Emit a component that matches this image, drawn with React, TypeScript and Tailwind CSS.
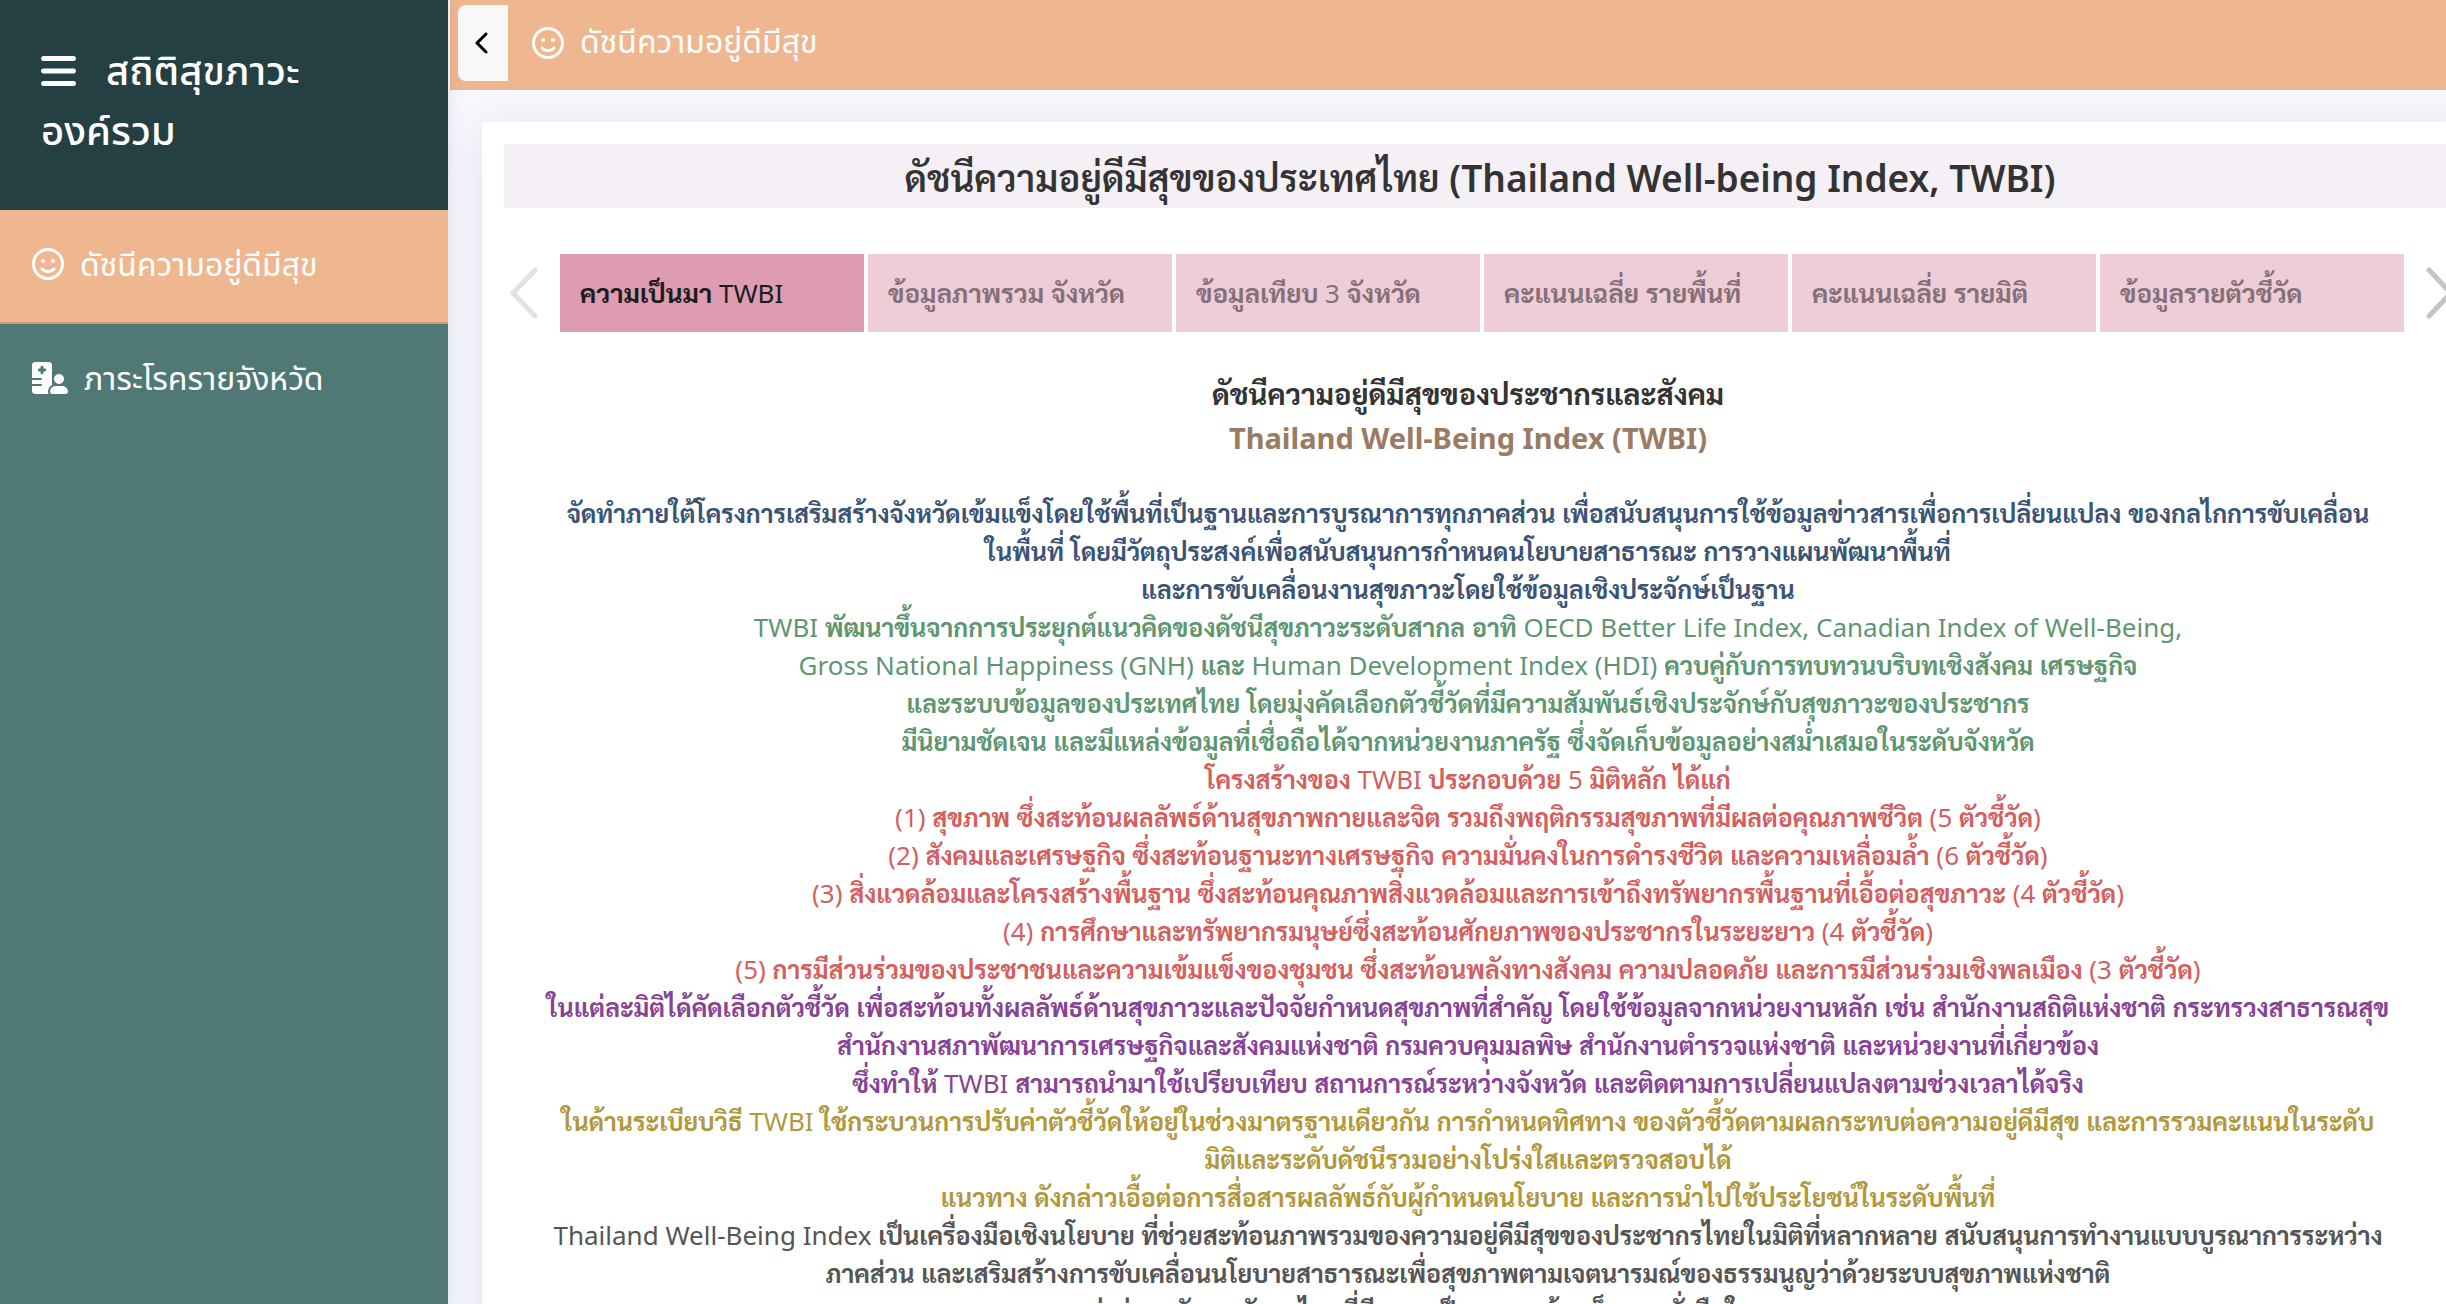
import { FaBars, FaChevronLeft, FaHospitalUser, FaRegFaceSmile } from "react-icons/fa6";

const tabs = [
  "ความเป็นมา TWBI",
  "ข้อมูลภาพรวม จังหวัด",
  "ข้อมูลเทียบ 3 จังหวัด",
  "คะแนนเฉลี่ย รายพื้นที่",
  "คะแนนเฉลี่ย รายมิติ",
  "ข้อมูลรายตัวชี้วัด",
];

const paragraphs = [
  {
    color: "text-[#3a5475]",
    lines: [
      "จัดทำภายใต้โครงการเสริมสร้างจังหวัดเข้มแข็งโดยใช้พื้นที่เป็นฐานและการบูรณาการทุกภาคส่วน เพื่อสนับสนุนการใช้ข้อมูลข่าวสารเพื่อการเปลี่ยนแปลง ของกลไกการขับเคลื่อน",
      "ในพื้นที่ โดยมีวัตถุประสงค์เพื่อสนับสนุนการกำหนดนโยบายสาธารณะ การวางแผนพัฒนาพื้นที่",
      "และการขับเคลื่อนงานสุขภาวะโดยใช้ข้อมูลเชิงประจักษ์เป็นฐาน",
    ],
  },
  {
    color: "text-[#5f9672]",
    lines: [
      "TWBI พัฒนาขึ้นจากการประยุกต์แนวคิดของดัชนีสุขภาวะระดับสากล อาทิ OECD Better Life Index, Canadian Index of Well-Being,",
      "Gross National Happiness (GNH) และ Human Development Index (HDI) ควบคู่กับการทบทวนบริบทเชิงสังคม เศรษฐกิจ",
      "และระบบข้อมูลของประเทศไทย โดยมุ่งคัดเลือกตัวชี้วัดที่มีความสัมพันธ์เชิงประจักษ์กับสุขภาวะของประชากร",
      "มีนิยามชัดเจน และมีแหล่งข้อมูลที่เชื่อถือได้จากหน่วยงานภาครัฐ ซึ่งจัดเก็บข้อมูลอย่างสม่ำเสมอในระดับจังหวัด",
    ],
  },
  {
    color: "text-[#d35f5f]",
    lines: [
      "โครงสร้างของ TWBI ประกอบด้วย 5 มิติหลัก ได้แก่",
      "(1) สุขภาพ ซึ่งสะท้อนผลลัพธ์ด้านสุขภาพกายและจิต รวมถึงพฤติกรรมสุขภาพที่มีผลต่อคุณภาพชีวิต (5 ตัวชี้วัด)",
      "(2) สังคมและเศรษฐกิจ ซึ่งสะท้อนฐานะทางเศรษฐกิจ ความมั่นคงในการดำรงชีวิต และความเหลื่อมล้ำ (6 ตัวชี้วัด)",
      "(3) สิ่งแวดล้อมและโครงสร้างพื้นฐาน ซึ่งสะท้อนคุณภาพสิ่งแวดล้อมและการเข้าถึงทรัพยากรพื้นฐานที่เอื้อต่อสุขภาวะ (4 ตัวชี้วัด)",
      "(4) การศึกษาและทรัพยากรมนุษย์ซึ่งสะท้อนศักยภาพของประชากรในระยะยาว (4 ตัวชี้วัด)",
      "(5) การมีส่วนร่วมของประชาชนและความเข้มแข็งของชุมชน ซึ่งสะท้อนพลังทางสังคม ความปลอดภัย และการมีส่วนร่วมเชิงพลเมือง (3 ตัวชี้วัด)",
    ],
  },
  {
    color: "text-[#874394]",
    lines: [
      "ในแต่ละมิติได้คัดเลือกตัวชี้วัด เพื่อสะท้อนทั้งผลลัพธ์ด้านสุขภาวะและปัจจัยกำหนดสุขภาพที่สำคัญ โดยใช้ข้อมูลจากหน่วยงานหลัก เช่น สำนักงานสถิติแห่งชาติ กระทรวงสาธารณสุข",
      "สำนักงานสภาพัฒนาการเศรษฐกิจและสังคมแห่งชาติ กรมควบคุมมลพิษ สำนักงานตำรวจแห่งชาติ และหน่วยงานที่เกี่ยวข้อง",
      "ซึ่งทำให้ TWBI สามารถนำมาใช้เปรียบเทียบ สถานการณ์ระหว่างจังหวัด และติดตามการเปลี่ยนแปลงตามช่วงเวลาได้จริง",
    ],
  },
  {
    color: "text-[#b1983f]",
    lines: [
      "ในด้านระเบียบวิธี TWBI ใช้กระบวนการปรับค่าตัวชี้วัดให้อยู่ในช่วงมาตรฐานเดียวกัน การกำหนดทิศทาง ของตัวชี้วัดตามผลกระทบต่อความอยู่ดีมีสุข และการรวมคะแนนในระดับ",
      "มิติและระดับดัชนีรวมอย่างโปร่งใสและตรวจสอบได้",
      "แนวทาง ดังกล่าวเอื้อต่อการสื่อสารผลลัพธ์กับผู้กำหนดนโยบาย และการนำไปใช้ประโยชน์ในระดับพื้นที่",
    ],
  },
  {
    color: "text-[#555555]",
    lines: [
      "Thailand Well-Being Index เป็นเครื่องมือเชิงนโยบาย ที่ช่วยสะท้อนภาพรวมของความอยู่ดีมีสุขของประชากรไทยในมิติที่หลากหลาย สนับสนุนการทำงานแบบบูรณาการระหว่าง",
      "ภาคส่วน และเสริมสร้างการขับเคลื่อนนโยบายสาธารณะเพื่อสุขภาพตามเจตนารมณ์ของธรรมนูญว่าด้วยระบบสุขภาพแห่งชาติ",
      "มุ่งสู่การพัฒนาสังคมไทยที่มีความเป็นธรรม เข้มแข็ง และยั่งยืนในระยะยาว",
    ],
  },
];

/* Thai runs are set bold, Latin words and digits keep the surrounding weight. */
function Mixed({ text, thaiClass }: { text: string; thaiClass: string }) {
  return (
    <>
      {text.split(/([\u0E00-\u0E7F]+)/).map((part, i) =>
        i % 2 ? (
          <b key={i} className={thaiClass}>
            {part}
          </b>
        ) : (
          part
        ),
      )}
    </>
  );
}

function Arrow({ points }: { points: string }) {
  return (
    <svg viewBox="0 0 28 52" className="h-[52px] w-7" fill="none" stroke="currentColor" strokeWidth="5" strokeLinecap="round" strokeLinejoin="round" aria-hidden="true">
      <polyline points={points} />
    </svg>
  );
}

export default function App() {
  return (
    <div className="flex h-screen overflow-hidden bg-[#f8f9fe] font-['Noto_Sans','Sarabun',sans-serif]">
      <aside className="z-10 w-[448px] shrink-0 bg-[#507975] text-white shadow-[0_0_16px_rgba(60,60,100,0.15)]">
        <div className="bg-[#244043] pt-[43px] pr-10 pb-[47px] pl-[41px] font-['Noto_Sans_Thai',sans-serif] text-[40px] leading-[60px] font-medium">
          <button type="button" aria-label="เมนู" className="mr-[30px] pb-1.5 align-middle">
            <FaBars className="h-10 w-[35px]" />
          </button>
          <span>สถิติสุขภาวะ</span>
          <br />
          <span>องค์รวม</span>
        </div>
        <nav className="font-['Noto_Sans_Thai',sans-serif] text-[32px] leading-[48px]">
          <a href="#twbi" className="flex items-center gap-4 border-b-2 border-[#cf9f7d] bg-[#efb78f] px-8 pt-7 pb-8">
            <FaRegFaceSmile className="size-8" />
            <span className="pt-1">ดัชนีความอยู่ดีมีสุข</span>
          </a>
          <a href="#disease" className="flex items-center gap-4 px-8 pt-7 pb-8">
            <FaHospitalUser className="h-8 w-9" />
            <span className="pt-1">ภาระโรครายจังหวัด</span>
          </a>
        </nav>
      </aside>

      <main className="min-w-0 flex-1 pl-0.5">
        <header className="flex h-[90px] items-center bg-[#efb78f] px-2 pb-1 font-['Noto_Sans_Thai',sans-serif] text-[32px] text-white">
          <button type="button" aria-label="ย้อนกลับ" className="mr-6 flex h-[76px] w-[50px] items-center justify-center rounded-l-lg bg-[#f8f9fa] text-black">
            <FaChevronLeft className="size-6" />
          </button>
          <FaRegFaceSmile className="mr-4 size-8" />
          <span>ดัชนีความอยู่ดีมีสุข</span>
        </header>

        <section className="mt-8 ml-8 w-full bg-white p-[22px] text-[#333333] shadow-[0_8px_48px_rgba(70,60,110,0.14)]">
          <h1 className="bg-[#f5f0f6] pt-1 text-center text-[37px] leading-[60px] font-semibold">
            ดัชนีความอยู่ดีมีสุขของประเทศไทย (Thailand Well-being Index, TWBI)
          </h1>

          <div className="mt-[46px] flex items-center gap-[22px] pr-0.5 pl-1.5">
            <button type="button" aria-label="ก่อนหน้า" className="text-[#e2e2e2]">
              <Arrow points="25,3 3,26 25,49" />
            </button>
            <div role="tablist" className="grid flex-1 grid-cols-6 gap-1">
              {tabs.map((tab, i) => (
                <button
                  key={tab}
                  type="button"
                  role="tab"
                  aria-selected={i === 0}
                  className={
                    "h-[78px] px-5 text-left text-[26px] whitespace-nowrap " +
                    (i === 0 ? "bg-[#dd9cb2] text-[#1c1c1c]" : "bg-[#eecdd8] text-[#857078]")
                  }
                >
                  <Mixed text={tab} thaiClass="font-bold" />
                </button>
              ))}
            </div>
            <button type="button" aria-label="ถัดไป" className="text-[#c4c4c4]">
              <Arrow points="3,3 25,26 3,49" />
            </button>
          </div>

          <article className="mt-10 pr-6 text-center whitespace-nowrap">
            <h2 className="text-[29px] leading-[44px] font-bold">ดัชนีความอยู่ดีมีสุขของประชากรและสังคม</h2>
            <p className="text-[29px] leading-[44px] font-bold text-[#9a7b63]">Thailand Well-Being Index (TWBI)</p>
            <div className="mt-[34px] text-[26px] leading-[38px]">
              {paragraphs.map((p) => (
                <div key={p.color} className={p.color}>
                  {p.lines.map((line) => (
                    <p key={line}>
                      <Mixed text={line} thaiClass="text-[25px] font-bold" />
                    </p>
                  ))}
                </div>
              ))}
            </div>
          </article>
        </section>
      </main>
    </div>
  );
}
